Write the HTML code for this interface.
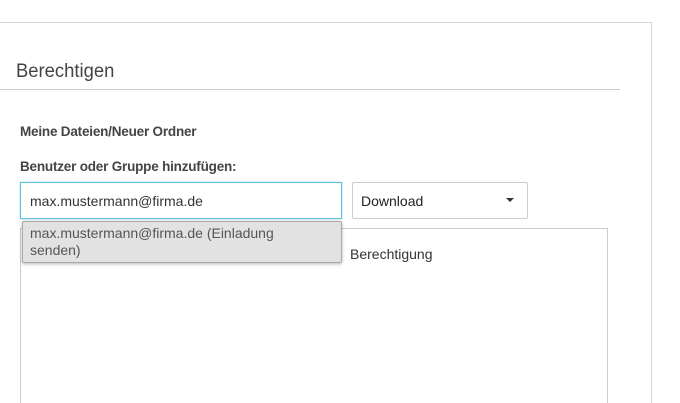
<!DOCTYPE html>
<html><head><style>
html,body{margin:0;width:680px;height:403px;overflow:hidden}
body{background:#fff;font-family:"Liberation Sans",Arial,sans-serif;position:relative}
div{position:absolute;box-sizing:border-box}
</style></head><body>
<div style="left:-1px;top:22px;width:653px;height:381px;border:1px solid #d4d4d4;border-left:none;border-bottom:none"></div>
<div style="left:16px;top:61px;font-size:19px;color:#444;transform:scaleX(0.97);transform-origin:left">Berechtigen</div>
<div style="left:0;top:89px;width:620px;height:1px;background:#ccc"></div>
<div style="left:20px;top:124px;font-size:13.5px;font-weight:bold;color:#444;letter-spacing:-0.2px">Meine Dateien/Neuer Ordner</div>
<div style="left:20px;top:159px;font-size:13.5px;font-weight:bold;color:#444;letter-spacing:-0.2px">Benutzer oder Gruppe hinzufügen:</div>
<div style="left:20px;top:182px;width:322px;height:37px;border:1px solid #5bc0de;box-shadow:0 0 2px #9cd6ee"></div>
<div style="left:30px;top:193px;font-size:14px;color:#333">max.mustermann@firma.de</div>
<div style="left:352px;top:182px;width:176px;height:37px;border:1px solid #ccc;border-radius:2px"></div>
<div style="left:361px;top:193px;font-size:14px;color:#222">Download</div>
<div style="left:506px;top:198px;width:0;height:0;border-left:4px solid transparent;border-right:4px solid transparent;border-top:4px solid #333"></div>
<div style="left:20px;top:228px;width:588px;height:175px;border:1px solid #ccc;border-bottom:none"></div>
<div style="left:350px;top:246px;font-size:14px;color:#333">Berechtigung</div>
<div style="left:22px;top:221px;width:320px;height:42px;background:#e2e2e2;border:1px solid #aaa;border-radius:2px;box-shadow:0 1px 3px rgba(0,0,0,.3)"></div>
<div style="left:30px;top:225px;width:260px;font-size:14px;line-height:17px;color:#555">max.mustermann@firma.de (Einladung senden)</div>
</body></html>
